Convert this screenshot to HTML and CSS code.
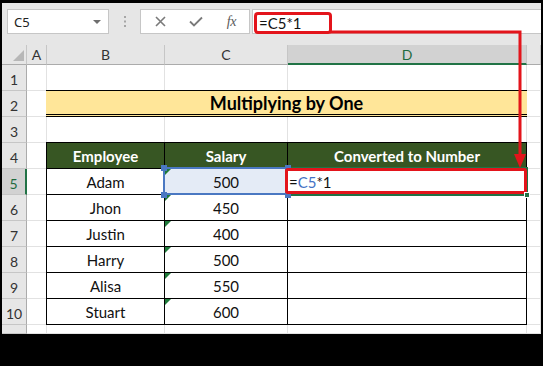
FILE: index.html
```html
<!DOCTYPE html>
<html lang="en">
  <head>
    <meta charset="UTF-8" />
    <meta name="viewport" content="width=device-width, initial-scale=1.0" />
    <title>Multiplying by One</title>
    <link rel="stylesheet" href="styles.css">
  </head>
  <body>
    <main class="app">
      <!-- Name box + formula bar -->
      <header class="toolbar">
        <div class="namebox">
          <span>C5</span>
          <span class="caret"></span>
        </div>
        <div class="grip">
          <svg width="2" height="11" viewBox="0 0 2 11">
            <rect x="0" y="0" width="2" height="2" fill="#a6a6a6" />
            <rect x="0" y="4.5" width="2" height="2" fill="#a6a6a6" />
            <rect x="0" y="9" width="2" height="2" fill="#a6a6a6" />
          </svg>
        </div>
        <div class="fx-buttons">
          <span class="fx-btn">
            <svg width="11" height="11" viewBox="0 0 11 11">
              <path d="M1 1 L10 10 M10 1 L1 10" stroke="#7a7a7a" stroke-width="1.6" fill="none" />
            </svg>
          </span>
          <span class="fx-btn">
            <svg width="14" height="11" viewBox="0 0 14 11">
              <path d="M1 5.5 L5 9.5 L13 1.5" stroke="#7a7a7a" stroke-width="1.8" fill="none" />
            </svg>
          </span>
          <span class="fx-btn fx-label">fx</span>
        </div>
        <div class="formula">
          <span class="formula-text">=C5*1</span>
        </div>
      </header>

      <!-- Worksheet -->
      <section class="sheet">
        <div class="corner"><span class="corner-tri"></span></div>
        <div class="col-head">A</div>
        <div class="col-head">B</div>
        <div class="col-head">C</div>
        <div class="col-head active">D</div>
        <div class="col-head"></div>

        <div class="row-head">1</div>
        <div class="cell"></div><div class="cell"></div><div class="cell"></div><div class="cell"></div><div class="cell"></div>

        <div class="row-head">2</div>
        <div class="cell"></div><div class="cell"></div>
        <div class="title">Multiplying by One</div>

        <div class="row-head">3</div>
        <div class="cell"></div><div class="cell"></div><div class="cell"></div><div class="cell"></div><div class="cell"></div>

        <div class="row-head">4</div><div class="cell"></div><div class="cell"></div>
        <div class="row-head active">5</div><div class="cell"></div><div class="cell"></div>
        <div class="row-head">6</div><div class="cell"></div><div class="cell"></div>
        <div class="row-head">7</div><div class="cell"></div><div class="cell"></div>
        <div class="row-head">8</div><div class="cell"></div><div class="cell"></div>
        <div class="row-head">9</div><div class="cell"></div><div class="cell"></div>
        <div class="row-head">10</div><div class="cell"></div><div class="cell"></div>

        <div class="row-head"></div>
        <div class="cell"></div><div class="cell"></div><div class="cell"></div><div class="cell"></div><div class="cell"></div>

        <!-- Data table B4:D10 -->
        <div class="data">
          <div class="th">Employee</div>
          <div class="th">Salary</div>
          <div class="th">Converted to Number</div>

          <div class="td">Adam</div>
          <div class="td num flag ref">
            500
            <span class="handle tl"></span><span class="handle tr"></span>
            <span class="handle bl"></span><span class="handle br"></span>
          </div>
          <div class="td edit">
            <span class="edit-text">=<span class="ref-text">C5</span>*1</span>
            <span class="red-box"></span>
            <span class="fill-handle"></span>
          </div>

          <div class="td">Jhon</div>
          <div class="td num flag">450</div>
          <div class="td"></div>

          <div class="td">Justin</div>
          <div class="td num flag">400</div>
          <div class="td"></div>

          <div class="td">Harry</div>
          <div class="td num flag">500</div>
          <div class="td"></div>

          <div class="td">Alisa</div>
          <div class="td num flag">550</div>
          <div class="td"></div>

          <div class="td">Stuart</div>
          <div class="td num flag">600</div>
          <div class="td"></div>
        </div>
      </section>
    </main>

    <!-- Callout arrow from formula bar to D5 -->
    <svg class="arrow" width="543" height="366" viewBox="0 0 543 366">
      <path d="M330 32 H520 V156" stroke="#e3141b" stroke-width="3" fill="none" />
      <polygon points="514,154 526,154 520,168" fill="#e3141b" />
    </svg>
  </body>
</html>
```

FILE: styles.css
```css
* {
  margin: 0;
  padding: 0;
  box-sizing: border-box;
}

html,
body {
  width: 100%;
  height: 100%;
}

body {
  background: #000;
  position: relative;
  overflow: hidden;
}

.app {
  width: 539px;
  height: 331px;
  margin: 3px 0 0 2px;
  background: #e6e6e6;
  display: flex;
  flex-direction: column;
  overflow: hidden;
}

/* Toolbar */
.toolbar {
  height: 42px;
  flex: none;
  display: flex;
  align-items: flex-start;
  padding: 6px 0 0 5px;
  font-family: "Noto Sans", "Open Sans", sans-serif;
}

.namebox {
  width: 102px;
  height: 25px;
  background: #fff;
  border: 1px solid #c6c6c6;
  display: flex;
  align-items: center;
  justify-content: space-between;
  padding: 0 7px 0 6px;
  font-size: 13px;
  color: #222;
}

.caret {
  width: 0;
  height: 0;
  border-left: 4px solid transparent;
  border-right: 4px solid transparent;
  border-top: 4px solid #6e6e6e;
}

.grip {
  width: 31px;
  height: 25px;
  display: flex;
  align-items: center;
  justify-content: center;
}

.fx-buttons {
  width: 110px;
  height: 25px;
  background: #fff;
  border: 1px solid #c6c6c6;
  display: flex;
  align-items: center;
  padding-left: 2px;
}

.fx-btn {
  width: 36px;
  display: flex;
  justify-content: center;
  align-items: center;
}

.fx-label {
  font-family: "Liberation Serif", serif;
  font-style: italic;
  font-size: 14px;
  color: #5a5a5a;
  letter-spacing: -0.5px;
}

.formula {
  flex: 1;
  height: 25px;
  margin-left: 2px;
  background: #fff;
  border: 1px solid #c6c6c6;
  border-right: none;
}

.formula-text {
  display: block;
  width: 78px;
  height: 22px;
  margin: 2px 0 0 1px;
  border: 3px solid #e3141b;
  border-radius: 4px;
  padding-left: 2px;
  font-family: Lato, "Liberation Sans", sans-serif;
  font-size: 15px;
  line-height: 16px;
  color: #111;
}

/* Worksheet grid */
.sheet {
  flex: 1;
  display: grid;
  grid-template-columns: 25px 20px 118px 123px 239px 1fr;
  grid-template-rows: 20px repeat(10, 26px) 1fr;
  background: #fff;
  font-family: Lato, "Liberation Sans", sans-serif;
}

.corner,
.col-head,
.row-head {
  background: #e6e6e6;
  color: #333;
  font-size: 14px;
  display: flex;
  align-items: center;
  justify-content: center;
}

.corner {
  position: relative;
  border-right: 1px solid #c6c6c6;
  border-bottom: 1px solid #ababab;
}

.corner-tri {
  position: absolute;
  right: 2px;
  bottom: 3px;
  width: 0;
  height: 0;
  border-left: 11px solid transparent;
  border-bottom: 11px solid #b7b7b7;
}

.col-head {
  border-right: 1px solid #c6c6c6;
  border-bottom: 1px solid #ababab;
}

.col-head.active {
  background: #d2d2d2;
  color: #1e6b3e;
  border-bottom: 2px solid #217346;
}

.row-head {
  border-right: 1px solid #ababab;
  border-bottom: 1px solid #c6c6c6;
  align-items: flex-end;
  padding-bottom: 2px;
}

.row-head.active {
  background: #d2d2d2;
  color: #1e6b3e;
  border-right: 2px solid #217346;
}

.cell {
  border-right: 1px solid #e2e2e2;
  border-bottom: 1px solid #e2e2e2;
}

/* Banner B2:D2 */
.title {
  grid-column: 3 / 6;
  grid-row: 3;
  margin: -1px 0 0 -1px;
  background: #ffe699;
  border-top: 1px solid #000;
  border-bottom: 3px double #000;
  display: flex;
  align-items: center;
  justify-content: center;
  font-size: 18px;
  font-weight: 700;
  color: #000;
}

/* Table B4:D10 */
.data {
  grid-column: 3 / 6;
  grid-row: 5 / 12;
  margin: -1px 0 0 -1px;
  display: grid;
  grid-template-columns: 118px 123px 1fr;
  grid-auto-rows: 26px;
  border-left: 1px solid #000;
  border-top: 1px solid #000;
  font-size: 15px;
}

.th,
.td {
  border-right: 1px solid #000;
  border-bottom: 1px solid #000;
  display: flex;
  align-items: center;
  justify-content: center;
  position: relative;
}

.th {
  background: #375623;
  color: #fff;
  font-weight: 700;
}

.td {
  color: #111;
}

/* number-stored-as-text marker */
.flag::before {
  content: "";
  position: absolute;
  top: 0;
  left: 0;
  border-top: 6px solid #1f7a3a;
  border-right: 6px solid transparent;
}

.ref {
  background: #e4ebf6;
}

.ref::after {
  content: "";
  position: absolute;
  top: -2px;
  left: -2px;
  right: -1px;
  bottom: -1px;
  border: 2px solid #4a78c2;
}

.handle {
  position: absolute;
  width: 6px;
  height: 6px;
  background: #4a78c2;
  z-index: 2;
}

.handle.tl { top: -4px; left: -4px; }
.handle.tr { top: -4px; right: -4px; }
.handle.bl { bottom: -4px; left: -4px; }
.handle.br { bottom: -4px; right: -4px; }

.edit {
  justify-content: flex-start;
  padding-left: 1px;
}

.edit::before {
  content: "";
  position: absolute;
  top: -2px;
  left: -2px;
  right: -2px;
  bottom: -2px;
  border: 2px solid #217346;
}

.edit-text {
  position: relative;
  z-index: 2;
}

.ref-text {
  color: #4472c4;
}

.red-box {
  position: absolute;
  top: -1px;
  left: -3px;
  right: -1px;
  bottom: 0;
  border: 3px solid #e3141b;
  border-radius: 3px;
  z-index: 3;
}

.fill-handle {
  position: absolute;
  right: -4px;
  bottom: -4px;
  width: 6px;
  height: 6px;
  background: #217346;
  border: 1px solid #fff;
  z-index: 4;
}

.arrow {
  position: absolute;
  top: 0;
  left: 0;
  pointer-events: none;
}
```
